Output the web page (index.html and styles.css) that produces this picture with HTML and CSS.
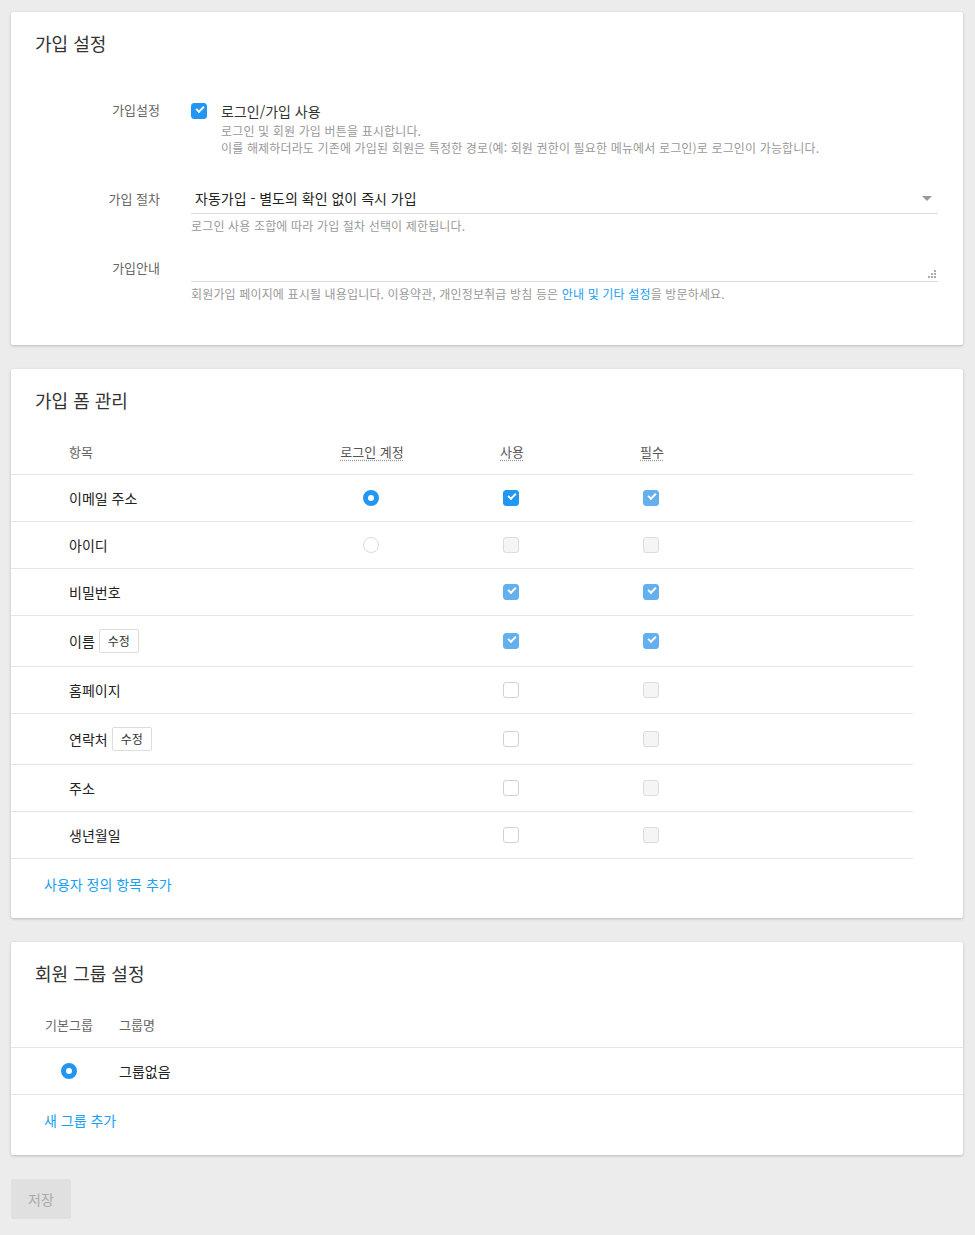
FILE: index.html
```html
<!DOCTYPE html>
<html lang="ko">
<head>
    <meta charset="UTF-8">
    <meta name="viewport" content="width=device-width, initial-scale=1.0">
    <title>가입 설정</title>
    <link rel="stylesheet" href="styles.css">
</head>
<body>
    <div class="card">
        <h2 class="card-title">가입 설정</h2>
        <div class="form">
            <div class="form-row">
                <label class="form-label">가입설정</label>
                <div class="form-field">
                    <label class="check-line">
                        <span class="check checked"></span>
                        <span>로그인/가입 사용</span>
                    </label>
                    <p class="help indent">로그인 및 회원 가입 버튼을 표시합니다.<br>이를 해제하더라도 기존에 가입된 회원은 특정한 경로(예: 회원 권한이 필요한 메뉴에서 로그인)로 로그인이 가능합니다.</p>
                </div>
            </div>
            <div class="form-row row-select">
                <label class="form-label">가입 절차</label>
                <div class="form-field">
                    <div class="select">
                        <span>자동가입 - 별도의 확인 없이 즉시 가입</span>
                        <span class="caret"></span>
                    </div>
                    <p class="help">로그인 사용 조합에 따라 가입 절차 선택이 제한됩니다.</p>
                </div>
            </div>
            <div class="form-row row-textarea">
                <label class="form-label">가입안내</label>
                <div class="form-field">
                    <div class="textarea">
                        <svg class="grip" width="8" height="8" viewBox="0 0 8 8">
                            <rect x="6" y="0" width="2" height="2" fill="#aaa"/>
                            <rect x="3" y="3" width="2" height="2" fill="#aaa"/>
                            <rect x="6" y="3" width="2" height="2" fill="#aaa"/>
                            <rect x="0" y="6" width="2" height="2" fill="#aaa"/>
                            <rect x="3" y="6" width="2" height="2" fill="#aaa"/>
                            <rect x="6" y="6" width="2" height="2" fill="#aaa"/>
                        </svg>
                    </div>
                    <p class="help">회원가입 페이지에 표시될 내용입니다. 이용약관, 개인정보취급 방침 등은 <a href="#">안내 및 기타 설정</a>을 방문하세요.</p>
                </div>
            </div>
        </div>
    </div>

    <div class="card">
        <h2 class="card-title">가입 폼 관리</h2>
        <div class="fields">
            <div class="fields-row fields-head">
                <div class="cell-name">항목</div>
                <div class="cell"><abbr>로그인 계정</abbr></div>
                <div class="cell"><abbr>사용</abbr></div>
                <div class="cell"><abbr>필수</abbr></div>
            </div>
            <div class="fields-row">
                <div class="cell-name">이메일 주소</div>
                <div class="cell"><span class="radio checked"></span></div>
                <div class="cell"><span class="check checked"></span></div>
                <div class="cell"><span class="check checked disabled"></span></div>
            </div>
            <div class="fields-row">
                <div class="cell-name">아이디</div>
                <div class="cell"><span class="radio"></span></div>
                <div class="cell"><span class="check disabled"></span></div>
                <div class="cell"><span class="check disabled"></span></div>
            </div>
            <div class="fields-row">
                <div class="cell-name">비밀번호</div>
                <div class="cell"></div>
                <div class="cell"><span class="check checked disabled"></span></div>
                <div class="cell"><span class="check checked disabled"></span></div>
            </div>
            <div class="fields-row">
                <div class="cell-name">이름 <button class="btn-small">수정</button></div>
                <div class="cell"></div>
                <div class="cell"><span class="check checked disabled"></span></div>
                <div class="cell"><span class="check checked disabled"></span></div>
            </div>
            <div class="fields-row">
                <div class="cell-name">홈페이지</div>
                <div class="cell"></div>
                <div class="cell"><span class="check"></span></div>
                <div class="cell"><span class="check disabled"></span></div>
            </div>
            <div class="fields-row">
                <div class="cell-name">연락처 <button class="btn-small">수정</button></div>
                <div class="cell"></div>
                <div class="cell"><span class="check"></span></div>
                <div class="cell"><span class="check disabled"></span></div>
            </div>
            <div class="fields-row">
                <div class="cell-name">주소</div>
                <div class="cell"></div>
                <div class="cell"><span class="check"></span></div>
                <div class="cell"><span class="check disabled"></span></div>
            </div>
            <div class="fields-row">
                <div class="cell-name">생년월일</div>
                <div class="cell"></div>
                <div class="cell"><span class="check"></span></div>
                <div class="cell"><span class="check disabled"></span></div>
            </div>
        </div>
        <div class="card-link"><a href="#">사용자 정의 항목 추가</a></div>
    </div>

    <div class="card">
        <h2 class="card-title">회원 그룹 설정</h2>
        <div class="groups">
            <div class="groups-row groups-head">
                <div class="cell-default">기본그룹</div>
                <div>그룹명</div>
            </div>
            <div class="groups-row">
                <div class="cell-default"><span class="radio checked"></span></div>
                <div>그룹없음</div>
            </div>
        </div>
        <div class="card-link"><a href="#">새 그룹 추가</a></div>
    </div>

    <button class="btn-save" disabled>저장</button>
</body>
</html>
```

FILE: styles.css
```css
body {
    margin: 0;
    padding: 12px 12px 16px 11px;
    background-color: #ececec;
    font-family: "Noto Sans CJK KR", "Noto Sans", sans-serif;
    font-size: 14px;
    line-height: 20px;
    color: #333;
}
.card {
    background: white;
    border-radius: 2px;
    box-shadow: 0 1px 3px rgba(0, 0, 0, 0.22);
    margin-bottom: 24px;
}
.card-title {
    margin: 0;
    padding: 19px 24px 0;
    font-size: 18px;
    line-height: 24px;
    font-weight: normal;
    color: #333;
}
a {
    color: #1aa0f0;
    text-decoration: none;
}

/* 가입 설정 */
.form {
    padding: 45px 25px 43px 0;
}
.form-row {
    display: grid;
    grid-template-columns: 149px 1fr;
    column-gap: 31px;
}
.row-select {
    margin-top: 28px;
}
.row-textarea {
    margin-top: 19px;
}
.form-label {
    text-align: right;
    font-size: 13px;
    color: #666;
}
.row-select .form-label,
.row-textarea .form-label {
    padding-top: 5px;
}
.check-line {
    display: flex;
    align-items: center;
    gap: 14px;
    height: 20px;
    padding-top: 1px;
}
.help {
    margin: 3px 0 0;
    font-size: 12px;
    line-height: 17px;
    color: #999;
    letter-spacing: 0.15px;
}
.help.indent {
    margin: 0;
    padding: 1px 0 0 30px;
}
.select {
    display: flex;
    justify-content: space-between;
    align-items: center;
    height: 27px;
    padding: 0 6px 2px 4px;
    border-bottom: 1px solid #ddd;
    color: #222;
}
.caret {
    width: 0;
    height: 0;
    border-left: 5px solid transparent;
    border-right: 5px solid transparent;
    border-top: 5px solid #999;
    margin-top: 2px;
}
.textarea {
    display: flex;
    justify-content: flex-end;
    align-items: flex-end;
    height: 25px;
    padding: 0 2px 3px 0;
    border-bottom: 1px solid #ddd;
}

/* 체크박스, 라디오 */
.check {
    display: inline-block;
    box-sizing: border-box;
    width: 16px;
    height: 16px;
    border: 1px solid #ccd3d9;
    border-radius: 3px;
    background: white;
    vertical-align: middle;
    position: relative;
}
.check.disabled {
    background: #f5f5f5;
    border-color: #dcdcdc;
}
.check.checked {
    background: #2196f3;
    border-color: #2196f3;
}
.check.checked.disabled {
    background: #64b0ef;
    border-color: #64b0ef;
}
.check.checked::after {
    content: "";
    position: absolute;
    left: 4px;
    top: 2px;
    width: 6px;
    height: 3px;
    border-left: 2px solid white;
    border-bottom: 2px solid white;
    transform: rotate(-45deg);
}
.radio {
    display: inline-block;
    box-sizing: border-box;
    width: 16px;
    height: 16px;
    border: 1px solid #d8dce0;
    border-radius: 50%;
    background: white;
    vertical-align: middle;
}
.radio.checked {
    border: 5px solid #2196f3;
}

/* 가입 폼 관리 */
.fields {
    margin-top: 18px;
    margin-right: 50px;
}
.fields-row {
    display: grid;
    grid-template-columns: 290px 140px 140px 140px 1fr;
    align-items: center;
    padding: 13px 0;
    border-bottom: 1px solid #e6e6e6;
    min-height: 20px;
}
.fields-head {
    padding: 12px 0;
    color: #666;
    font-size: 13px;
}
.fields-head .cell-name {
    font-size: 13px;
    color: #666;
}
.cell-name {
    display: flex;
    align-items: center;
    gap: 4px;
    padding-left: 58px;
    font-size: 14px;
    color: #222;
}
.cell {
    display: flex;
    justify-content: center;
    align-items: center;
    height: 20px;
}
abbr {
    text-decoration: underline dotted #999;
    text-underline-offset: 3px;
    color: #555;
    padding-left: 2px;
}
.btn-small {
    font-family: inherit;
    font-size: 12px;
    line-height: 16px;
    height: 24px;
    padding: 3px 8px;
    background: white;
    color: #333;
    border: 1px solid #ddd;
    border-radius: 2px;
}
.card-link {
    padding: 15px 33px 24px;
}
.groups + .card-link {
    padding-bottom: 25px;
}

/* 회원 그룹 설정 */
.groups {
    margin-top: 18px;
}
.groups-row {
    display: grid;
    grid-template-columns: 108px 1fr;
    align-items: center;
    padding: 13px 0;
    border-bottom: 1px solid #e6e6e6;
    color: #222;
}
.groups-head {
    padding: 12px 0;
    font-size: 13px;
    color: #666;
}
.cell-default {
    box-sizing: border-box;
    width: 82px;
    padding-left: 34px;
    text-align: center;
    height: 20px;
    display: flex;
    justify-content: center;
    align-items: center;
}

.btn-save {
    display: block;
    width: 60px;
    height: 40px;
    padding: 0;
    font-family: inherit;
    font-size: 14px;
    color: #aaa;
    background: #e0e0e0;
    border: none;
    border-radius: 2px;
}
```
